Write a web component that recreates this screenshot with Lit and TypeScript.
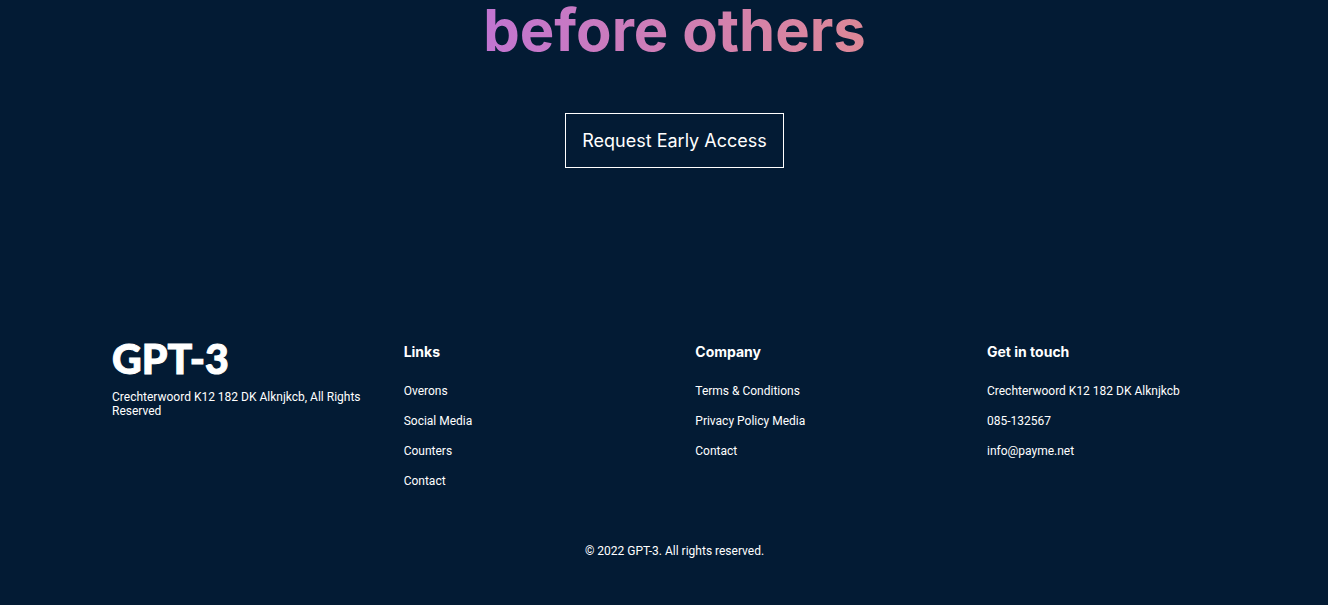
import { LitElement, html, css } from "lit";
import { customElement } from "lit/decorators.js";

interface FooterItem {
  label: string;
  href?: string;
}

interface FooterColumn {
  title: string;
  items: FooterItem[];
}

const columns: FooterColumn[] = [
  {
    title: "Links",
    items: [
      { label: "Overons", href: "#overons" },
      { label: "Social Media", href: "#social" },
      { label: "Counters", href: "#counters" },
      { label: "Contact", href: "#contact" },
    ],
  },
  {
    title: "Company",
    items: [
      { label: "Terms & Conditions", href: "#terms" },
      { label: "Privacy Policy Media", href: "#privacy" },
      { label: "Contact", href: "#contact" },
    ],
  },
  {
    title: "Get in touch",
    items: [
      { label: "Crechterwoord K12 182 DK Alknjkcb" },
      { label: "085-132567", href: "tel:085132567" },
      { label: "info@payme.net", href: "mailto:info@payme.net" },
    ],
  },
];

@customElement("app-root")
export class AppRoot extends LitElement {
  static styles = css`
    :host {
      display: block;
      min-height: 100vh;
      box-sizing: border-box;
      padding: 0 75px 0 96px;
      background: #031b34;
      color: #fff;
      font-family: Roboto, Inter, sans-serif;
      font-size: 12px;
      line-height: 14px;
    }
    .cta {
      display: flex;
      flex-direction: column;
      align-items: center;
      gap: 53px;
    }
    .title {
      width: 100%;
      max-width: 960px;
      margin: 0;
      text-align: center;
      font-family: Inter, sans-serif;
      font-size: 58px;
      line-height: 60px;
      font-weight: 700;
      background: linear-gradient(90deg, #ae67fa 2%, #f49867 103%);
      -webkit-background-clip: text;
      background-clip: text;
      color: transparent;
    }
    .request {
      padding: 16px;
      border: 1px solid #fff;
      border-radius: 0;
      background: transparent;
      color: #fff;
      font-family: Inter, sans-serif;
      font-size: 18px;
      line-height: 21px;
      cursor: pointer;
    }
    .columns {
      display: flex;
      flex-wrap: wrap;
      justify-content: space-between;
      margin-top: 175px;
      padding-left: 16px;
      padding-right: 16px;
    }
    .column {
      width: 250px;
    }
    .logo {
      font-family: Lato, sans-serif;
      font-size: 41px;
      line-height: 32px;
      font-weight: 900;
      -webkit-text-stroke: 1px currentColor;
    }
    .address {
      margin: 15px 0 0;
    }
    .heading {
      margin: 0 0 24px;
      font-family: Inter, sans-serif;
      font-size: 14px;
      line-height: 17px;
      font-weight: 700;
    }
    .list {
      display: flex;
      flex-direction: column;
      gap: 16px;
      margin: 0;
      padding: 0;
      list-style: none;
    }
    .link {
      color: inherit;
      text-decoration: none;
    }
    .copyright {
      margin: 56px 0 0;
      padding-bottom: 46px;
      text-align: center;
    }
  `;

  render() {
    return html`
      <section class="cta">
        <h1 class="title">before others</h1>
        <button class="request" type="button">Request Early Access</button>
      </section>
      <footer>
        <div class="columns">
          <div class="column">
            <div class="logo">GPT-3</div>
            <p class="address">Crechterwoord K12 182 DK Alknjkcb, All Rights Reserved</p>
          </div>
          ${columns.map(
            (column) => html`
              <div class="column">
                <h4 class="heading">${column.title}</h4>
                <ul class="list">
                  ${column.items.map(
                    (item) => html`<li>
                      ${item.href
                        ? html`<a class="link" href=${item.href}>${item.label}</a>`
                        : item.label}
                    </li>`
                  )}
                </ul>
              </div>
            `
          )}
        </div>
        <p class="copyright">© 2022 GPT-3. All rights reserved.</p>
      </footer>
    `;
  }
}
